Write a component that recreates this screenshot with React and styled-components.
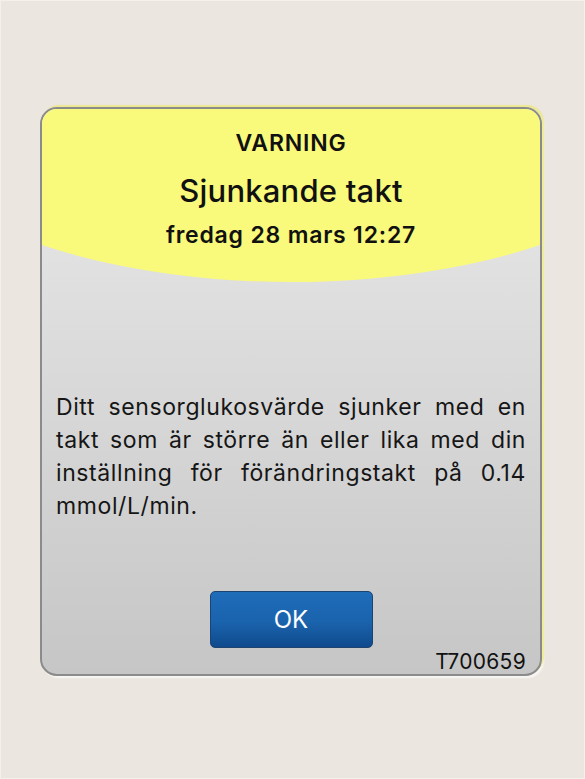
import React from "react";
import styled, { createGlobalStyle } from "styled-components";

const GlobalStyle = createGlobalStyle`
  html, body {
    margin: 0;
    padding: 0;
    background: #ebe6df;
  }
  body {
    font-family: Inter, "Noto Sans", "Liberation Sans", sans-serif;
    color: #111;
  }
`;

const Page = styled.div`
  box-sizing: border-box;
  width: 585px;
  height: 779px;
  border: 1px solid #f4f1ec;
  padding: 106px 0 0 39px;
  background: #ebe6df;
`;

const Card = styled.div`
  box-sizing: border-box;
  width: 502px;
  height: 569px;
  border: 2px solid #8b8b8b;
  border-radius: 17px;
  overflow: hidden;
  display: flex;
  flex-direction: column;
  background: linear-gradient(180deg, #eaeaea 0%, #dcdcdc 40%, #c6c6c6 100%);
  box-shadow: 2px -2px 1px rgba(236, 232, 120, 0.75), 2px 2px 2px rgba(255, 255, 255, 0.7);
`;

const Header = styled.div`
  height: 173px;
  flex-shrink: 0;
  background: #f9f97c;
  clip-path: ellipse(81% 100% at 50% 0);
  display: flex;
  flex-direction: column;
  align-items: center;
  padding-top: 20px;
  box-sizing: border-box;
`;

const Kind = styled.div`
  font-size: 23px;
  line-height: 28px;
  font-weight: 600;
  letter-spacing: 0.8px;
`;

const Title = styled.div`
  margin-top: 16px;
  font-size: 31px;
  line-height: 36px;
  font-weight: 500;
  letter-spacing: 0.2px;
`;

const Stamp = styled.div`
  margin-top: 12px;
  font-size: 23px;
  line-height: 28px;
  font-weight: 600;
  letter-spacing: 0.8px;
`;

const Body = styled.div`
  flex: 1;
  display: flex;
  flex-direction: column;
  padding: 0 14px;
`;

const Message = styled.p`
  margin: 109px 0 0;
  font-size: 23px;
  line-height: 33px;
  letter-spacing: 0.6px;
  text-align: justify;
  color: #161616;
`;

const Actions = styled.div`
  display: flex;
  justify-content: center;
  margin-top: 68px;
`;

const OkButton = styled.button`
  width: 163px;
  height: 57px;
  border: 1px solid #1d4370;
  border-radius: 5px;
  background: linear-gradient(180deg, #1f6cb9 0%, #1a63ad 55%, #0f4a8c 100%);
  color: #fff;
  font-family: inherit;
  font-size: 24px;
  font-weight: 400;
  cursor: pointer;
`;

const Code = styled.div`
  align-self: flex-end;
  margin-top: 2px;
  font-size: 21px;
  line-height: 24px;
  letter-spacing: 0.3px;
  color: #111;
`;

export default function App() {
  return (
    <>
      <GlobalStyle />
      <Page>
        <Card>
          <Header>
            <Kind>VARNING</Kind>
            <Title>Sjunkande takt</Title>
            <Stamp>fredag 28 mars 12:27</Stamp>
          </Header>
          <Body>
            <Message>
              Ditt sensorglukosvärde sjunker med en takt som är större än eller
              lika med din inställning för förändringstakt på 0.14 mmol/L/min.
            </Message>
            <Actions>
              <OkButton>OK</OkButton>
            </Actions>
            <Code>T700659</Code>
          </Body>
        </Card>
      </Page>
    </>
  );
}
